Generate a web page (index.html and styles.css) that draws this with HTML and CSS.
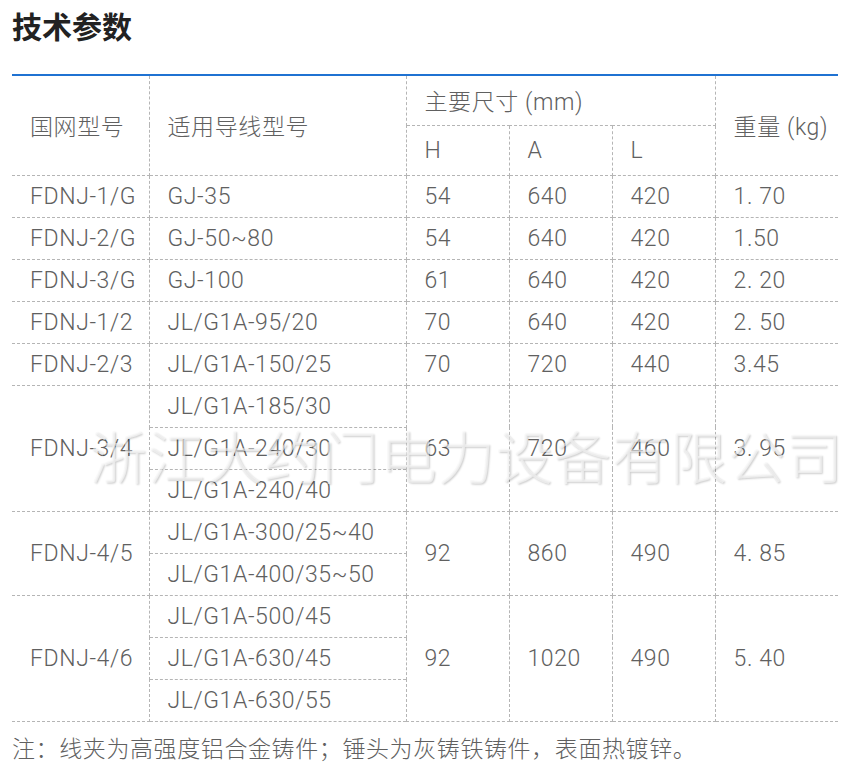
FILE: index.html
```html
<!DOCTYPE html>
<html lang="zh-CN">
<head>
<meta charset="utf-8">
<title>技术参数</title>
<link rel="stylesheet" href="styles.css">
</head>
<body>
<div class="page">
  <h2 class="title">技术参数</h2>
  <div class="table-wrap">
    <table class="spec">
      <colgroup>
        <col class="c-model">
        <col class="c-wire">
        <col class="c-dim">
        <col class="c-dim">
        <col class="c-dim">
        <col class="c-weight">
      </colgroup>
      <thead>
        <tr class="h1">
          <th rowspan="2">国网型号</th>
          <th rowspan="2">适用导线型号</th>
          <th colspan="3">主要尺寸 (mm)</th>
          <th rowspan="2" class="last">重量 (kg)</th>
        </tr>
        <tr class="h2">
          <th>H</th>
          <th>A</th>
          <th>L</th>
        </tr>
      </thead>
      <tbody>
        <tr><td>FDNJ-1/G</td><td>GJ-35</td><td>54</td><td>640</td><td>420</td><td class="last">1. 70</td></tr>
        <tr><td>FDNJ-2/G</td><td>GJ-50~80</td><td>54</td><td>640</td><td>420</td><td class="last">1.50</td></tr>
        <tr><td>FDNJ-3/G</td><td>GJ-100</td><td>61</td><td>640</td><td>420</td><td class="last">2. 20</td></tr>
        <tr><td>FDNJ-1/2</td><td>JL/G1A-95/20</td><td>70</td><td>640</td><td>420</td><td class="last">2. 50</td></tr>
        <tr><td>FDNJ-2/3</td><td>JL/G1A-150/25</td><td>70</td><td>720</td><td>440</td><td class="last">3.45</td></tr>
        <tr><td rowspan="3">FDNJ-3/4</td><td>JL/G1A-185/30</td><td rowspan="3">63</td><td rowspan="3">720</td><td rowspan="3">460</td><td rowspan="3" class="last">3. 95</td></tr>
        <tr><td>JL/G1A-240/30</td></tr>
        <tr><td>JL/G1A-240/40</td></tr>
        <tr><td rowspan="2">FDNJ-4/5</td><td>JL/G1A-300/25~40</td><td rowspan="2">92</td><td rowspan="2">860</td><td rowspan="2">490</td><td rowspan="2" class="last">4. 85</td></tr>
        <tr><td>JL/G1A-400/35~50</td></tr>
        <tr><td rowspan="3">FDNJ-4/6</td><td>JL/G1A-500/45</td><td rowspan="3">92</td><td rowspan="3">1020</td><td rowspan="3">490</td><td rowspan="3" class="last">5. 40</td></tr>
        <tr><td>JL/G1A-630/45</td></tr>
        <tr><td>JL/G1A-630/55</td></tr>
      </tbody>
    </table>
    <div class="watermark">浙江大约门电力设备有限公司</div>
  </div>
  <p class="note">注：线夹为高强度铝合金铸件；锤头为灰铸铁铸件，表面热镀锌。</p>
</div>
</body>
</html>
```

FILE: styles.css
```css
html, body {
  margin: 0;
  padding: 0;
  background: #ffffff;
}

.page {
  width: 826px;
  padding: 4px 0 0 12px;
  font-family: Roboto, "Noto Sans CJK SC", "Noto Sans", sans-serif;
  color: #606060;
}

.title {
  margin: 0;
  height: 42px;
  font-family: "Noto Sans CJK SC", sans-serif;
  font-size: 30px;
  line-height: 42px;
  font-weight: 700;
  color: #222222;
  margin-bottom: 28px;
}

.table-wrap {
  position: relative;
}

.spec {
  width: 826px;
  border-collapse: collapse;
  table-layout: fixed;
  border-top: 2px solid #1f72d2;
}

.c-model { width: 137px; }
.c-wire { width: 257px; }
.c-dim { width: 103px; }
.c-weight { width: 123px; }

.spec th,
.spec td {
  font-size: 23px;
  font-weight: 300;
  letter-spacing: 0.6px;
  text-align: left;
  vertical-align: middle;
  padding: 0 0 0 18px;
  border: 1px dashed #b5b5b5;
  white-space: nowrap;
  color: #606060;
}

.spec th:first-child,
.spec td:first-child {
  border-left: none;
}

.spec .last {
  border-right: none;
}

.spec tr.h1 { height: 50px; }
.spec tr.h2 { height: 50px; }
.spec tbody tr { height: 42px; }

.spec tr.h1 th { border-top: none; }

.watermark {
  position: absolute;
  left: 78px;
  top: 340px;
  font-family: "Noto Sans CJK SC", sans-serif;
  font-size: 57px;
  line-height: 80px;
  letter-spacing: 1px;
  white-space: nowrap;
  color: rgba(250, 250, 250, 0.6);
  text-shadow: 1px 1px 2px rgba(0, 0, 0, 0.2);
  font-weight: 300;
  pointer-events: none;
}

.note {
  margin: 9px 0 0 0;
  font-family: "Noto Sans CJK SC", sans-serif;
  font-size: 23px;
  line-height: 32px;
  font-weight: 300;
  letter-spacing: 0.6px;
  color: #606060;
}
```
